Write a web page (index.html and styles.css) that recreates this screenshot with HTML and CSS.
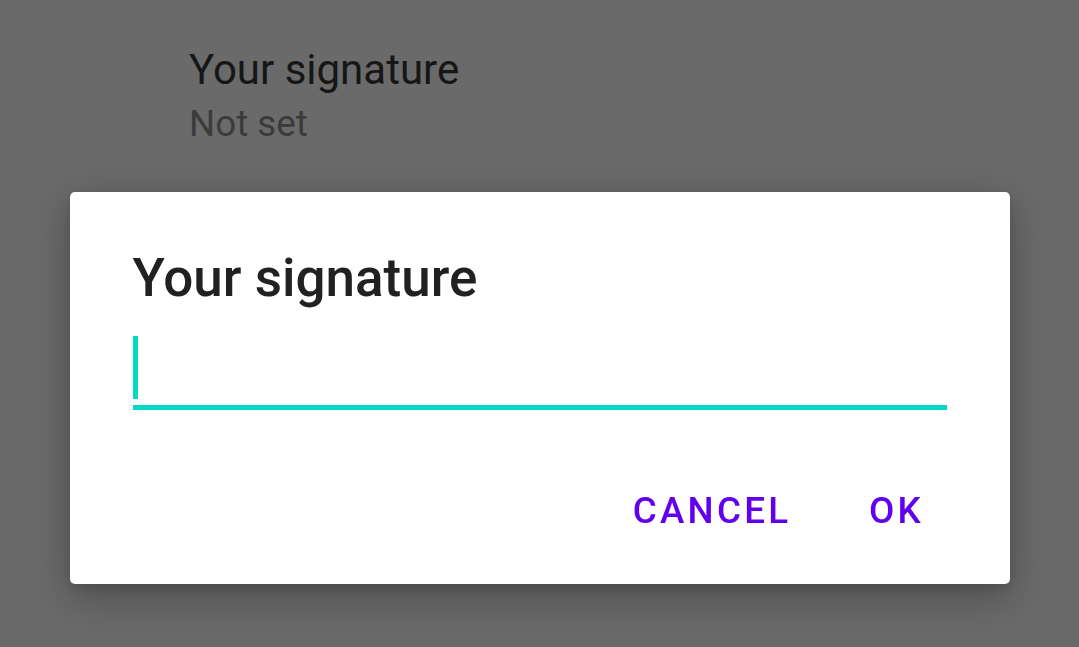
FILE: index.html
```html
<!DOCTYPE html>
<html lang="en">
<head>
  <meta charset="UTF-8" />
  <title>Your signature</title>
  <link rel="stylesheet" href="styles.css">
</head>
<body>
  <div class="settings">
    <div class="pref">
      <div class="pref-title">Your signature</div>
      <div class="pref-summary">Not set</div>
    </div>
  </div>

  <div class="scrim">
    <div class="dialog">
      <div class="dialog-title">Your signature</div>
      <div class="field">
        <span class="cursor"></span>
      </div>
      <div class="actions">
        <button class="btn">Cancel</button>
        <button class="btn">OK</button>
      </div>
    </div>
  </div>
</body>
</html>
```

FILE: styles.css
```css
* {
  box-sizing: border-box;
}

html, body {
  margin: 0;
  padding: 0;
  height: 100%;
  font-family: Roboto, 'Noto Sans', sans-serif;
  background-color: #6a6a6a;
  overflow: hidden;
}

.settings {
  padding: 45px 0 0 189px;
}

.pref-title {
  font-size: 42px;
  line-height: 50px;
  color: #161616;
}

.pref-summary {
  margin-top: 7px;
  font-size: 36.75px;
  line-height: 44px;
  color: #3b3b3b;
}

.scrim {
  position: fixed;
  inset: 0;
  display: flex;
  justify-content: center;
  align-items: flex-start;
  padding-top: 192px;
}

.dialog {
  width: 940px;
  height: 392px;
  background: #ffffff;
  border-radius: 5px;
  box-shadow: 0 12px 40px rgba(0, 0, 0, 0.28), 0 4px 12px rgba(0, 0, 0, 0.12);
  padding: 54px 63px 0 63px;
  display: flex;
  flex-direction: column;
}

.dialog-title {
  font-size: 53px;
  font-weight: 500;
  line-height: 64px;
  color: #212121;
}

.field {
  margin-top: 26px;
  padding-bottom: 6px;
  border-bottom: 5px solid #03dac5;
  display: flex;
}

.cursor {
  display: block;
  width: 5px;
  height: 63px;
  background: #03dac5;
}

.actions {
  display: flex;
  justify-content: flex-end;
  margin-top: 77px;
  margin-right: -34px;
}

.btn {
  min-width: 168px;
  padding: 0 21px;
  border: none;
  background: none;
  font-family: Roboto, 'Noto Sans', sans-serif;
  font-size: 36.75px;
  font-weight: 500;
  line-height: 48px;
  letter-spacing: 3.3px;
  text-transform: uppercase;
  color: #6200ee;
  text-align: center;
}
```
